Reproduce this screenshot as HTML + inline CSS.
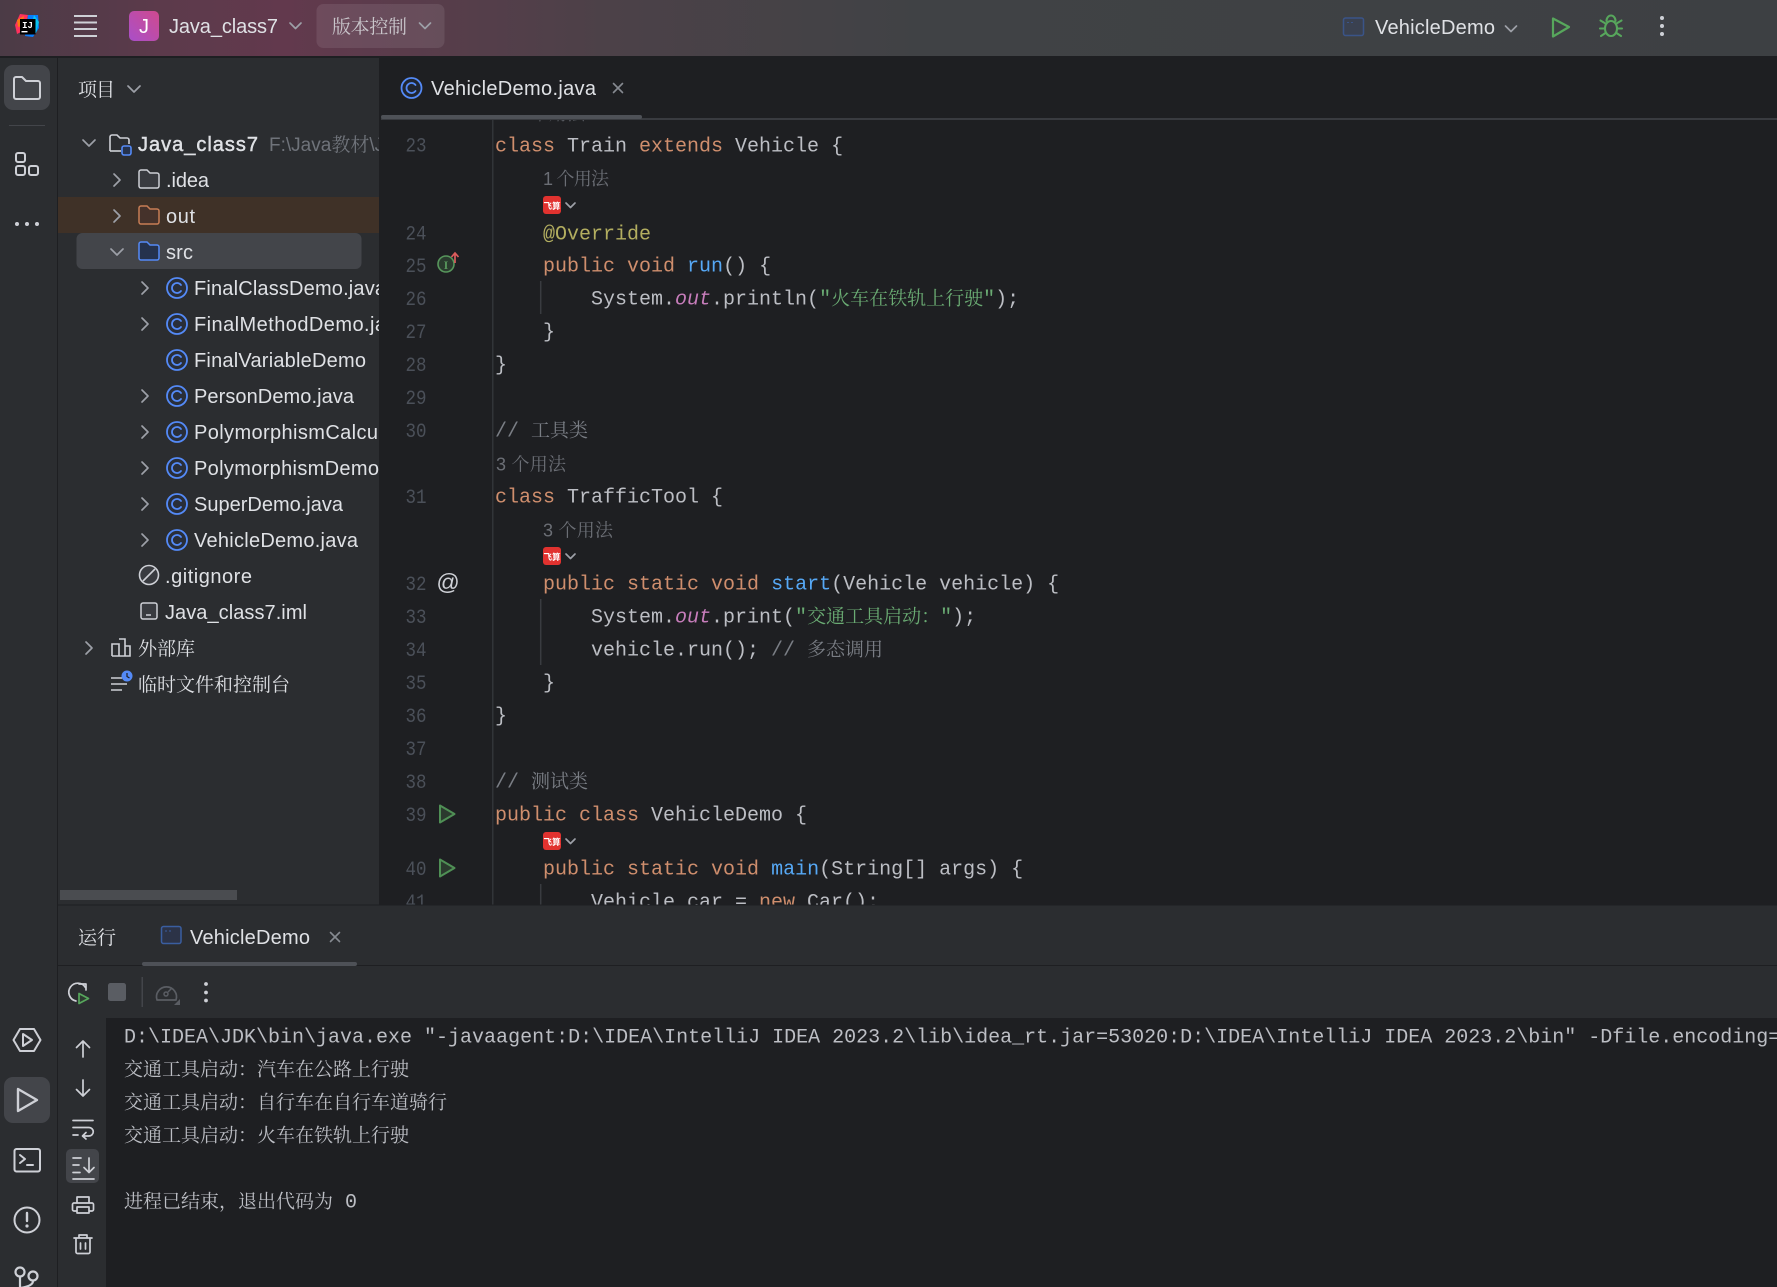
<!DOCTYPE html>
<html lang="zh"><head><meta charset="utf-8"><title>VehicleDemo</title>
<style>
html,body{margin:0;padding:0;background:#1e1f22;width:1777px;height:1287px;overflow:hidden}
svg{display:block}
text{white-space:pre}
.u{font-family:"Liberation Sans","Noto Serif CJK SC",sans-serif;font-size:20px;fill:#dfe1e5}
.z{font-family:"Noto Serif CJK SC","Liberation Sans",serif;font-size:19px;fill:#dfe1e5}
.m{font-family:"Liberation Mono","Noto Serif CJK SC",monospace;font-size:20px;fill:#bcbec4}
.m tspan.c,.h{font-family:"Noto Serif CJK SC","Liberation Sans",serif;font-size:19px}
.k{fill:#cf8e6d}.f{fill:#56a8f5}.s{fill:#6aab73}.a{fill:#b3ae60}.i{fill:#c77dbb;font-style:italic}.g{fill:#7a7e85}
.n{font-family:"Liberation Mono",monospace;font-size:20px;fill:#4b5059}
.hint{font-family:"Liberation Sans","Noto Serif CJK SC",sans-serif;font-size:18px;fill:#6b6e75}
.ic{fill:none;stroke:#ced0d6;stroke-width:2;stroke-linecap:round;stroke-linejoin:round}
.chev{fill:none;stroke:#9da0a8;stroke-width:1.7;stroke-linecap:round;stroke-linejoin:round}
.x{fill:none;stroke:#868a91;stroke-width:1.6;stroke-linecap:round}
</style></head><body>
<svg xmlns="http://www.w3.org/2000/svg" width="1777" height="1287" viewBox="0 0 1777 1287">
<defs>
<linearGradient id="tb" x1="0" x2="1" y1="0" y2="0">
<stop offset="0" stop-color="#4b3b46"/><stop offset=".09" stop-color="#5c3a4b"/><stop offset=".16" stop-color="#62394d"/><stop offset=".34" stop-color="#4c4148"/><stop offset=".52" stop-color="#404245"/><stop offset="1" stop-color="#3d4043"/>
</linearGradient>
<linearGradient id="jg" x1="0" x2="1" y1="1" y2="0"><stop offset="0" stop-color="#a94fc9"/><stop offset="1" stop-color="#cf4a8e"/></linearGradient>
<clipPath id="pc"><rect x="58" y="58" width="321" height="847"/></clipPath>
<clipPath id="ec"><rect x="380" y="120" width="1397" height="785"/></clipPath>
<clipPath id="cc"><rect x="106" y="1018" width="1671" height="269"/></clipPath>
<symbol id="cls" overflow="visible" viewBox="0 0 22 22" width="22" height="22">
<circle cx="11" cy="11" r="10" fill="#26304a" fill-opacity=".35" stroke="#548af7" stroke-width="1.8"/>
<path d="M15 8a5 5 0 1 0 0 6" fill="none" stroke="#548af7" stroke-width="1.8" stroke-linecap="round"/>
</symbol>
<symbol id="fs" overflow="visible" viewBox="0 0 18 18" width="18" height="18">
<rect width="18" height="18" rx="3" fill="#e1322f"/>
<text x="9" y="13" text-anchor="middle" font-family="Noto Sans CJK SC,sans-serif" font-size="8.5" font-weight="700" fill="#fff">飞算</text>
</symbol>
<symbol id="run" overflow="visible" viewBox="0 0 18 20" width="18" height="20">
<path d="M2 1.500L16.500 10L2 18.500Z" fill="#2b3a2e" stroke="#4f8f55" stroke-width="2" stroke-linejoin="round"/>
</symbol>
</defs>

<rect width="1777" height="1287" fill="#1e1f22"/>

<!-- title bar -->
<rect width="1777" height="56" fill="url(#tb)"/>
<rect y="56" width="1777" height="2" fill="#1e1f22"/>
<!-- logo -->
<path d="M20 14L28 15L25 30L17 34L15 25Z" fill="#fe315d"/>
<path d="M17 20L24 16L22 26L18 27Z" fill="#f97a12"/>
<path d="M28 15L38 15L39 28L33 37L25 36Z" fill="#087cfa"/>
<path d="M34 15L39 22L36 33L30 30Z" fill="#07c3f2"/>
<rect x="20" y="19" width="15.5" height="15.5" fill="#000"/>
<text x="27.5" y="28" text-anchor="middle" font-family="Liberation Mono,monospace" font-weight="700" font-size="9" fill="#fff">IJ</text>
<rect x="21.5" y="31" width="6" height="1.4" fill="#fff"/>
<!-- hamburger -->
<path d="M74 16H97M74 22.5H97M74 29H97M74 36H97" stroke="#ced0d6" stroke-width="2" fill="none"/>
<!-- project widget -->
<rect x="129" y="11" width="30" height="30" rx="5" fill="url(#jg)"/>
<text x="144" y="33" text-anchor="middle" class="u" style="font-size:20px;fill:#fff">J</text>
<text x="169" y="33" class="u" textLength="109" lengthAdjust="spacing">Java_class7</text>
<path class="chev" d="M290 23L295.500 28.500L301 23"/>
<rect x="316.500" y="4" width="128" height="44" rx="7" fill="#fff" fill-opacity=".09"/>
<text x="332" y="33" class="z" textLength="75" lengthAdjust="spacing" style="fill:#c9c6cb">版本控制</text>
<path class="chev" d="M419.500 23L425 28.500L430.500 23"/>
<!-- run widget -->
<rect x="1343.500" y="18" width="20" height="17.500" rx="2" fill="#3a4150" stroke="#3a5488" stroke-width="1.500"/>
<path d="M1347 22.500h2M1351 22.500h2" stroke="#3a5488" stroke-width="1"/>
<text x="1375" y="34" class="u" textLength="120" lengthAdjust="spacing">VehicleDemo</text>
<path class="chev" d="M1505.500 26L1511 31.500L1516.500 26"/>
<path d="M1553 18.500L1569 27L1553 36.500Z" fill="none" stroke="#57a65c" stroke-width="2.200" stroke-linejoin="round"/>
<g fill="none" stroke="#57a65c" stroke-width="2.100" stroke-linecap="round">
<ellipse cx="1611" cy="28.500" rx="6" ry="7.500"/>
<path d="M1606.500 21a4.500 5.500 0 0 1 9 0M1600.500 20.500l5 3M1621.500 20.500l-5 3M1600 28.500h5M1622 28.500h-5M1601 36l4.500-3M1621 36l-4.500-3"/>
</g>
<g fill="#ced0d6"><circle cx="1662" cy="18" r="2"/><circle cx="1662" cy="26" r="2"/><circle cx="1662" cy="34" r="2"/></g>

<!-- left strip -->
<rect x="0" y="58" width="57" height="1229" fill="#2b2d30"/>
<rect x="57" y="58" width="1" height="1229" fill="#1e1f22"/>
<rect x="4" y="65" width="46" height="45" rx="9" fill="#43454a"/>
<path class="ic" d="M14 79a2 2 0 0 1 2-2h6l4 4h12a2 2 0 0 1 2 2v14a2 2 0 0 1-2 2H16a2 2 0 0 1-2-2Z"/>
<rect x="9" y="125" width="36" height="1" fill="#43454a"/>
<g class="ic"><rect x="16" y="153" width="9" height="9" rx="2"/><rect x="16" y="166" width="9" height="9" rx="2"/><rect x="29" y="166" width="9" height="9" rx="2"/></g>
<g fill="#ced0d6"><circle cx="17" cy="224" r="2"/><circle cx="27" cy="224" r="2"/><circle cx="37" cy="224" r="2"/></g>
<g class="ic">
<path d="M13.500 1040L20 1029H34L40.500 1040L34 1051H20Z"/>
<path d="M23 1034L32 1040L23 1046Z"/>
</g>
<rect x="4" y="1077" width="46" height="46" rx="9" fill="#43454a"/>
<path class="ic" d="M18 1089L37 1100L18 1111Z" style="stroke-width:2.400"/>
<g class="ic">
<rect x="14.500" y="1149" width="25.500" height="22.500" rx="2"/>
<path d="M20 1155L25 1159L20 1163M27 1165H33"/>
<circle cx="27" cy="1220" r="12.500"/>
<path d="M27 1213V1221" style="stroke-width:2.400"/>
</g>
<circle cx="27" cy="1226" r="1.600" fill="#ced0d6"/>
<g class="ic" style="stroke-width:2.200">
<circle cx="20" cy="1272" r="4.500"/><circle cx="33" cy="1276" r="4.500"/>
<path d="M20 1277V1292M33 1281c0 4-6 6-13 7"/>
</g>

<!-- project panel -->
<rect x="58" y="58" width="321" height="847" fill="#2b2d30"/>
<text x="78" y="96" class="z" textLength="37" lengthAdjust="spacing">项目</text>
<path class="chev" d="M128 86L134 92L140 86"/>
<g clip-path="url(#pc)">
<rect x="58" y="197" width="321" height="36" fill="#3f3127"/>
<rect x="76.500" y="233" width="285" height="36" rx="6" fill="#43454a"/>

<path class="chev" d="M83 140L89 146L95 140"/>
<path d="M110 151v-14a2 2 0 0 1 2-2h5l3 3h7a2 2 0 0 1 2 2v4" fill="none" stroke="#ced0d6" stroke-width="1.600"/>
<path d="M110 151h11" stroke="#ced0d6" stroke-width="1.600" fill="none"/>
<rect x="122" y="146" width="9" height="9" rx="2" fill="#25324d" stroke="#548af7" stroke-width="1.600"/>
<text x="138" y="151" class="u" textLength="120" lengthAdjust="spacing" style="stroke:#dfe1e5;stroke-width:.45px;paint-order:stroke">Java_class7</text>
<text x="269" y="151" class="u" style="fill:#6f737a;font-size:19px">F:\Java<tspan class="z" style="fill:#6f737a">教材</tspan>\Java</text>

<path class="chev" d="M114 174L120 180L114 186"/>
<path d="M139 172a2 2 0 0 1 2-2h6l3 3h7a2 2 0 0 1 2 2v11a2 2 0 0 1-2 2h-16a2 2 0 0 1-2-2Z" fill="#393b40" stroke="#ced0d6" stroke-width="1.500"/>
<text x="166" y="187" class="u" textLength="43" lengthAdjust="spacing">.idea</text>

<path class="chev" d="M114 210L120 216L114 222"/>
<path d="M139 208a2 2 0 0 1 2-2h6l3 3h7a2 2 0 0 1 2 2v11a2 2 0 0 1-2 2h-16a2 2 0 0 1-2-2Z" fill="#45322b" stroke="#c77d55" stroke-width="1.500"/>
<text x="166" y="223" class="u" textLength="29" lengthAdjust="spacing">out</text>

<path class="chev" d="M111 249L117 255L123 249"/>
<path d="M139 244a2 2 0 0 1 2-2h6l3 3h7a2 2 0 0 1 2 2v11a2 2 0 0 1-2 2h-16a2 2 0 0 1-2-2Z" fill="#25324d" stroke="#548af7" stroke-width="1.500"/>
<text x="166" y="259" class="u" textLength="27" lengthAdjust="spacing">src</text>

<path class="chev" d="M142 282L148 288L142 294"/><use href="#cls" x="166" y="277"/>
<text x="194" y="295" class="u" textLength="192" lengthAdjust="spacing">FinalClassDemo.java</text>
<path class="chev" d="M142 318L148 324L142 330"/><use href="#cls" x="166" y="313"/>
<text x="194" y="331" class="u" textLength="214" lengthAdjust="spacing">FinalMethodDemo.java</text>
<use href="#cls" x="166" y="349"/>
<text x="194" y="367" class="u" textLength="172" lengthAdjust="spacing">FinalVariableDemo</text>
<path class="chev" d="M142 390L148 396L142 402"/><use href="#cls" x="166" y="385"/>
<text x="194" y="403" class="u" textLength="160" lengthAdjust="spacing">PersonDemo.java</text>
<path class="chev" d="M142 426L148 432L142 438"/><use href="#cls" x="166" y="421"/>
<text x="194" y="439" class="u" textLength="184" lengthAdjust="spacing">PolymorphismCalcu</text>
<path class="chev" d="M142 462L148 468L142 474"/><use href="#cls" x="166" y="457"/>
<text x="194" y="475" class="u" textLength="185" lengthAdjust="spacing">PolymorphismDemo</text>
<path class="chev" d="M142 498L148 504L142 510"/><use href="#cls" x="166" y="493"/>
<text x="194" y="511" class="u" textLength="149" lengthAdjust="spacing">SuperDemo.java</text>
<path class="chev" d="M142 534L148 540L142 546"/><use href="#cls" x="166" y="529"/>
<text x="194" y="547" class="u" textLength="164" lengthAdjust="spacing">VehicleDemo.java</text>

<circle cx="149" cy="575" r="9.500" fill="#393b40" stroke="#ced0d6" stroke-width="1.600"/>
<path d="M143 581L155 569" stroke="#ced0d6" stroke-width="1.600"/>
<text x="165" y="583" class="u" textLength="87" lengthAdjust="spacing">.gitignore</text>
<rect x="141" y="603" width="16" height="16" rx="2" fill="#393b40" stroke="#ced0d6" stroke-width="1.500"/>
<path d="M146 615H151" stroke="#ced0d6" stroke-width="1.500"/>
<text x="165" y="619" class="u" textLength="142" lengthAdjust="spacing">Java_class7.iml</text>

<path class="chev" d="M86 642L92 648L86 654"/>
<path d="M112 656V644H119V656M119 639H125V656M125 646H130V656H112" fill="none" stroke="#ced0d6" stroke-width="1.600"/>
<text x="138" y="655" class="z">外部库</text>
<path d="M111 678H122M111 684H127M111 690H122" stroke="#ced0d6" stroke-width="1.600" fill="none"/>
<circle cx="127" cy="676" r="5.500" fill="#548af7"/>
<path d="M127 673V676.500L129.500 678" stroke="#1e1f22" stroke-width="1.200" fill="none"/>
<text x="138" y="691" class="z">临时文件和控制台</text>
</g>
<rect x="60" y="890" width="177" height="10" fill="#4a4c50"/>

<!-- editor tab -->
<use href="#cls" x="400.500" y="77"/>
<text x="431" y="95" class="u" textLength="165" lengthAdjust="spacing">VehicleDemo.java</text>
<path class="x" d="M613.500 83.500L622.500 92.500M622.500 83.500L613.500 92.500"/>
<rect x="381" y="118" width="1396" height="2" fill="#393b40"/>
<rect x="381" y="115" width="261" height="4" rx="2" fill="#4e5157"/>

<!-- editor -->
<rect x="492" y="120" width="1.500" height="785" fill="#313438"/>
<g clip-path="url(#ec)">
<text x="516" y="120" class="hint" style="fill:#55585e">1 个用法</text>
<g class="n">
<text x="405.500" y="151.500" textLength="21" lengthAdjust="spacingAndGlyphs">23</text><text x="405.500" y="239.500" textLength="21" lengthAdjust="spacingAndGlyphs">24</text><text x="405.500" y="272" textLength="21" lengthAdjust="spacingAndGlyphs">25</text><text x="405.500" y="305" textLength="21" lengthAdjust="spacingAndGlyphs">26</text><text x="405.500" y="338" textLength="21" lengthAdjust="spacingAndGlyphs">27</text><text x="405.500" y="371" textLength="21" lengthAdjust="spacingAndGlyphs">28</text><text x="405.500" y="404" textLength="21" lengthAdjust="spacingAndGlyphs">29</text><text x="405.500" y="437" textLength="21" lengthAdjust="spacingAndGlyphs">30</text><text x="405.500" y="503" textLength="21" lengthAdjust="spacingAndGlyphs">31</text><text x="405.500" y="590" textLength="21" lengthAdjust="spacingAndGlyphs">32</text><text x="405.500" y="623" textLength="21" lengthAdjust="spacingAndGlyphs">33</text><text x="405.500" y="656" textLength="21" lengthAdjust="spacingAndGlyphs">34</text><text x="405.500" y="689" textLength="21" lengthAdjust="spacingAndGlyphs">35</text><text x="405.500" y="722" textLength="21" lengthAdjust="spacingAndGlyphs">36</text><text x="405.500" y="755" textLength="21" lengthAdjust="spacingAndGlyphs">37</text><text x="405.500" y="788" textLength="21" lengthAdjust="spacingAndGlyphs">38</text><text x="405.500" y="821" textLength="21" lengthAdjust="spacingAndGlyphs">39</text><text x="405.500" y="875" textLength="21" lengthAdjust="spacingAndGlyphs">40</text><text x="405.500" y="908" textLength="21" lengthAdjust="spacingAndGlyphs">41</text>
</g>
<circle cx="446" cy="264" r="8" fill="#2a3b2e" stroke="#57965c" stroke-width="1.600"/>
<text x="446" y="269" text-anchor="middle" font-family="Liberation Serif,serif" font-size="12" font-weight="700" fill="#57965c">I</text>
<path d="M455 263V254M451.500 257L455 253L458.500 257" fill="none" stroke="#db5c5c" stroke-width="1.700"/>
<text x="448" y="590" text-anchor="middle" font-family="Liberation Sans,sans-serif" font-size="23" fill="#ced0d6">@</text>
<use href="#run" x="438" y="804"/><use href="#run" x="438" y="858"/>

<path d="M540.700 281V314M540.700 599V665M540.700 884V905" stroke="#393b40" stroke-width="1.500" fill="none"/>

<text class="hint" x="543" y="185" textLength="66" lengthAdjust="spacing">1 个用法</text>
<use href="#fs" x="543" y="196"/><path class="chev" d="M566 203L570.500 207.500L575 203"/>
<text class="hint" x="496" y="470.500" textLength="70" lengthAdjust="spacing">3 个用法</text>
<text class="hint" x="543" y="536.500" textLength="70" lengthAdjust="spacing">3 个用法</text>
<use href="#fs" x="543" y="547"/><path class="chev" d="M566 554L570.500 558.500L575 554"/>
<use href="#fs" x="543" y="832"/><path class="chev" d="M566 839L570.500 843.500L575 839"/>

<g transform="translate(-1,-.5)">
<text class="m" x="496" y="152"><tspan class="k">class</tspan> Train <tspan class="k">extends</tspan> Vehicle {</text>
<text class="m a" x="544" y="240">@Override</text>
<text class="m" x="544" y="272"><tspan class="k">public void</tspan> <tspan class="f">run</tspan>() {</text>
<text class="m" x="592" y="305">System.<tspan class="i">out</tspan>.println(<tspan class="s">"<tspan class="c">火车在铁轨上行驶</tspan>"</tspan>);</text>
<text class="m" x="544" y="338">}</text>
<text class="m" x="496" y="371">}</text>
<text class="m g" x="496" y="437">// <tspan class="c g">工具类</tspan></text>
<text class="m" x="496" y="503"><tspan class="k">class</tspan> TrafficTool {</text>
<text class="m" x="544" y="590"><tspan class="k">public static void</tspan> <tspan class="f">start</tspan>(Vehicle vehicle) {</text>
<text class="m" x="592" y="623">System.<tspan class="i">out</tspan>.print(<tspan class="s">"<tspan class="c">交通工具启动：</tspan>"</tspan>);</text>
<text class="m" x="592" y="656">vehicle.run(); <tspan class="g">// <tspan class="c g">多态调用</tspan></tspan></text>
<text class="m" x="544" y="689">}</text>
<text class="m" x="496" y="722">}</text>
<text class="m g" x="496" y="788">// <tspan class="c g">测试类</tspan></text>
<text class="m" x="496" y="821"><tspan class="k">public class</tspan> VehicleDemo {</text>
<text class="m" x="544" y="875"><tspan class="k">public static void</tspan> <tspan class="f">main</tspan>(String[] args) {</text>
<text class="m" x="592" y="908">Vehicle car = <tspan class="k">new</tspan> Car();</text>
</g>
</g>

<!-- bottom panel -->
<rect x="58" y="905" width="1719" height="113" fill="#2b2d30"/>
<rect x="58" y="904.500" width="1719" height="1" fill="#1e1f22"/>
<rect x="58" y="965" width="1719" height="1" fill="#1e1f22"/>
<text x="78" y="944" class="z" textLength="38" lengthAdjust="spacing">运行</text>
<rect x="161.500" y="926.500" width="19.500" height="17" rx="2" fill="#2c3347" stroke="#3a5ea0" stroke-width="1.500"/>
<path d="M165 931h2M169 931h2" stroke="#3a5ea0" stroke-width="1"/>
<text x="190" y="944" class="u" textLength="120" lengthAdjust="spacing">VehicleDemo</text>
<path class="x" d="M330.500 932.500L339.500 941.500M339.500 932.500L330.500 941.500"/>
<rect x="142" y="962" width="215" height="4" rx="2" fill="#4e5157"/>

<path d="M85.500 987.500A9 9 0 1 0 76 1001" fill="none" stroke="#ced0d6" stroke-width="1.700" stroke-linecap="round"/>
<path d="M79 984H86V990" fill="none" stroke="#ced0d6" stroke-width="1.700" stroke-linecap="round" stroke-linejoin="round"/>
<path d="M79 993.500L88.500 998.500L79 1003.500Z" fill="#2d3b30" stroke="#57a65c" stroke-width="1.700" stroke-linejoin="round"/>
<rect x="108" y="983" width="18" height="18" rx="2.500" fill="#5a5d63"/>
<rect x="141.500" y="977" width="1.500" height="30" fill="#43454a"/>
<path d="M157 1000a10 10 0 1 1 19 0Z" fill="none" stroke="#5a5d63" stroke-width="1.700" stroke-linejoin="round"/>
<circle cx="166" cy="994" r="2" fill="none" stroke="#5a5d63" stroke-width="1.500"/>
<path d="M168 992L172 988" stroke="#5a5d63" stroke-width="1.500"/>
<path d="M174 1005L180 1005L180 999Z" fill="#5a5d63"/>
<g fill="#ced0d6"><circle cx="206" cy="984" r="1.900"/><circle cx="206" cy="992.500" r="1.900"/><circle cx="206" cy="1000.500" r="1.900"/></g>

<!-- console -->
<rect x="58" y="1018" width="48" height="269" fill="#2b2d30"/>
<rect x="106" y="1018" width="1671" height="269" fill="#1e1f22"/>
<g class="ic" style="stroke-width:1.700">
<path d="M83 1057V1041M76.500 1047.500L83 1041L89.500 1047.500"/>
<path d="M83 1080V1096M76.500 1089.500L83 1096L89.500 1089.500"/>
<path d="M73 1120.500H93M73 1127.500H89a4 4 0 0 1 0 8.500H83M86 1132.500L82.500 1136L86 1139M73 1135H78"/>
</g>
<rect x="66" y="1149" width="33" height="34" rx="5" fill="#43454a"/>
<g class="ic" style="stroke-width:1.700">
<path d="M73 1158H81M73 1165H79M73 1172.500H80M89 1158V1172M84 1167.500L89 1172.500L94 1167.500M73 1179H94" />
<path d="M77 1203V1197H89V1203M77 1211H74a1.500 1.500 0 0 1-1.500-1.500V1204.500A1.500 1.500 0 0 1 74 1203H92a1.500 1.500 0 0 1 1.500 1.500V1209.500A1.500 1.500 0 0 1 92 1211H89M77 1207H89V1213H77Z"/>
<path d="M75.500 1238H90.500M74 1238H92M79 1238V1235H87V1238M76 1238V1252a1.500 1.500 0 0 0 1.500 1.500H88.500a1.500 1.500 0 0 0 1.500-1.500V1238M80.500 1243V1249M85.500 1243V1249"/>
</g>
<g clip-path="url(#cc)"><g transform="translate(-1,-.5)">
<text class="m" x="125" y="1043">D:\IDEA\JDK\bin\java.exe "-javaagent:D:\IDEA\IntelliJ IDEA 2023.2\lib\idea_rt.jar=53020:D:\IDEA\IntelliJ IDEA 2023.2\bin" -Dfile.encoding=UTF-8 -classpath</text>
<text class="m" x="125" y="1076"><tspan class="c">交通工具启动：汽车在公路上行驶</tspan></text>
<text class="m" x="125" y="1109"><tspan class="c">交通工具启动：自行车在自行车道骑行</tspan></text>
<text class="m" x="125" y="1142"><tspan class="c">交通工具启动：火车在铁轨上行驶</tspan></text>
<text class="m" x="125" y="1208"><tspan class="c">进程已结束，退出代码为</tspan> 0</text>
</g></g>
</svg>
</body></html>
